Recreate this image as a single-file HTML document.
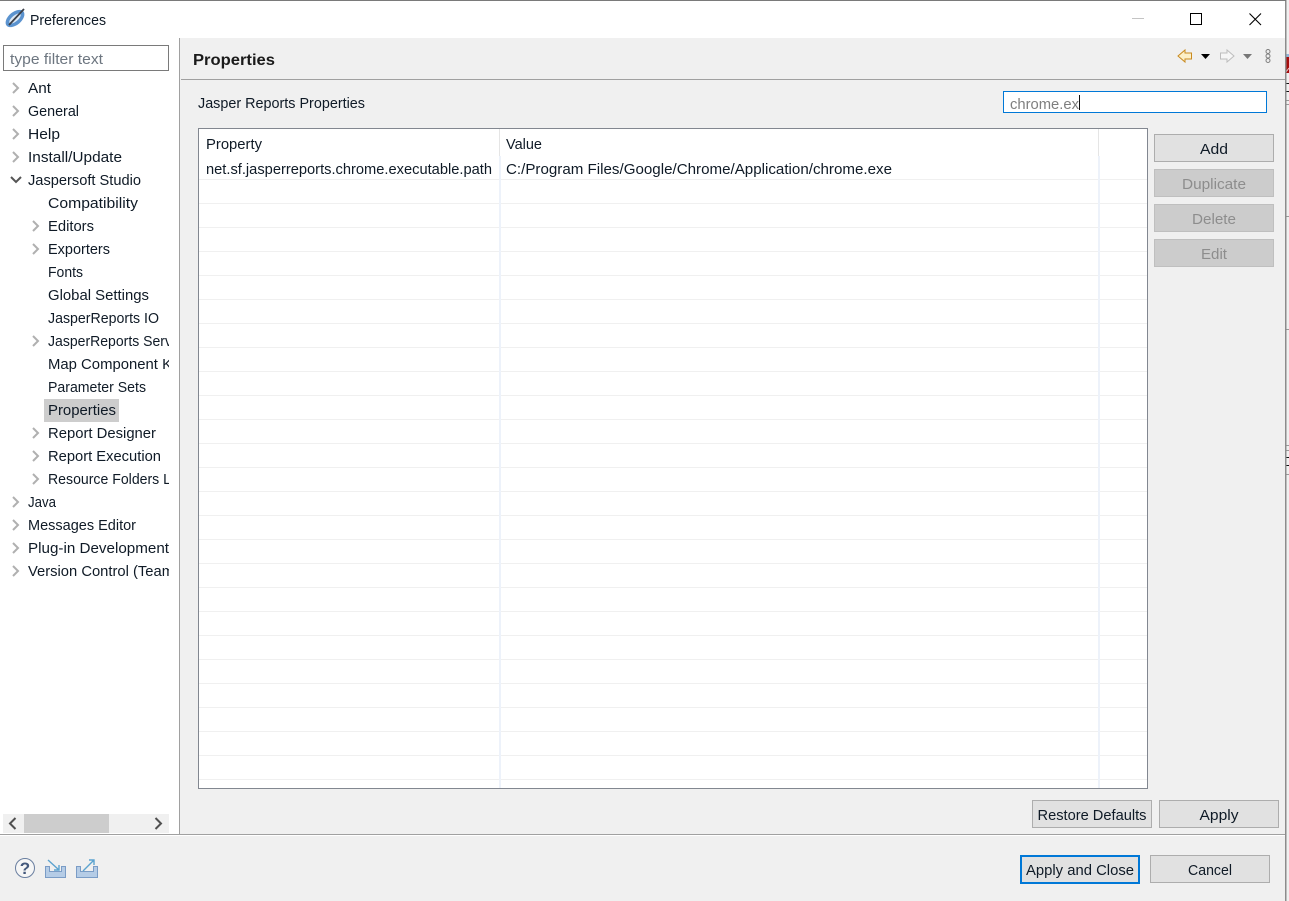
<!DOCTYPE html>
<html><head><meta charset="utf-8"><title>Preferences</title>
<style>
html,body{margin:0;padding:0;background:#f0f0f0;width:1289px;height:901px;overflow:hidden}
svg{display:block}
text{font-family:"Liberation Sans",sans-serif;font-size:15px;fill:#0f1a26}
.h{font-weight:bold;font-size:16px;fill:#1a1a1a}
.g{fill:#8a8a8a}
.d{fill:#8d8d8d}
.m{text-anchor:middle}
.c{fill:none;stroke:#b0b0b0;stroke-width:2}
.b{fill:#e1e1e1;stroke:#adadad;stroke-width:1}
.x{fill:#cccccc;stroke:#bfbfbf;stroke-width:1}
</style></head><body>
<svg width="1289" height="901" viewBox="0 0 1289 901" xmlns="http://www.w3.org/2000/svg">
<defs><clipPath id="tree"><rect x="0" y="76" width="169" height="520"/></clipPath></defs>
<rect width="1289" height="901" fill="#f0f0f0"/>
<!-- strip behind window -->
<rect x="1286" y="54" width="3" height="3" fill="#8fb4d8"/>
<rect x="1286" y="57" width="3" height="16" fill="#a60c0c"/>
<path d="M1286 72l3-4" stroke="#e8c8c8" stroke-width="1" fill="none"/>
<rect x="1286" y="83" width="3" height="1" fill="#111"/><rect x="1286" y="91" width="3" height="1" fill="#111"/>
<rect x="1286" y="100" width="3" height="1" fill="#999"/><rect x="1286" y="104" width="3" height="1" fill="#999"/>
<rect x="1286" y="216" width="3" height="1" fill="#999"/><rect x="1286" y="329" width="3" height="1" fill="#999"/>
<rect x="1286" y="445" width="3" height="1" fill="#999"/><rect x="1286" y="450" width="3" height="1" fill="#999"/>
<rect x="1286" y="457" width="3" height="1" fill="#111"/><rect x="1286" y="465" width="3" height="1" fill="#111"/>
<rect x="1286" y="474" width="3" height="1" fill="#999"/>
<rect x="1285" y="0" width="1.500" height="901" fill="#8c8c8c"/>
<!-- title bar -->
<rect x="0" y="0" width="1285" height="38" fill="#ffffff"/>
<rect x="0" y="0" width="1286" height="1" fill="#7a7a7a"/>
<g>
<ellipse cx="15" cy="18.500" rx="11" ry="6.500" transform="rotate(-40 15 18.500)" fill="#5b93cf"/>
<ellipse cx="15" cy="18.500" rx="7" ry="3" transform="rotate(-40 15 18.500)" fill="#dce9f6"/>
<path d="M9 25L24 9" stroke="#3c4048" stroke-width="1.800" fill="none"/>
</g>
<text x="30" y="25" textLength="76" lengthAdjust="spacingAndGlyphs" style="font-size:14.5px">Preferences</text>
<rect x="1132" y="18" width="12" height="1" fill="#c4c4c4"/>
<rect x="1190.500" y="13.500" width="11" height="11" fill="none" stroke="#000" stroke-width="1"/>
<path d="M1249.500 13.500L1261 25M1261 13.500L1249.500 25" stroke="#000" stroke-width="1.100" fill="none"/>
<!-- sidebar -->
<rect x="0" y="38" width="179" height="796" fill="#ffffff"/>
<rect x="179" y="38" width="1" height="796" fill="#a0a0a0"/>
<rect x="3.500" y="45.500" width="165" height="25" fill="#fff" stroke="#7a7a7a"/>
<text x="10" y="64" textLength="93" lengthAdjust="spacingAndGlyphs" class="g" style="fill:#6d7680">type filter text</text>
<rect x="44" y="399" width="75" height="23" fill="#cdcdcd"/>
<g>
<path class="c" d="M13 83l5 5-5 5M13 106l5 5-5 5M13 129l5 5-5 5M13 152l5 5-5 5M33 221l5 5-5 5M33 244l5 5-5 5M33 336l5 5-5 5M33 428l5 5-5 5M33 451l5 5-5 5M33 474l5 5-5 5M13 497l5 5-5 5M13 520l5 5-5 5M13 543l5 5-5 5M13 566l5 5-5 5"/>
<path d="M11 177l5 5 5-5" fill="none" stroke="#555" stroke-width="2"/>
</g>
<g clip-path="url(#tree)">
<text x="28" y="93" textLength="23" lengthAdjust="spacingAndGlyphs">Ant</text>
<text x="28" y="116" textLength="51" lengthAdjust="spacingAndGlyphs">General</text>
<text x="28" y="139" textLength="32" lengthAdjust="spacingAndGlyphs">Help</text>
<text x="28" y="162" textLength="94" lengthAdjust="spacingAndGlyphs">Install/Update</text>
<text x="28" y="185" textLength="113" lengthAdjust="spacingAndGlyphs">Jaspersoft Studio</text>
<text x="48" y="208" textLength="90" lengthAdjust="spacingAndGlyphs">Compatibility</text>
<text x="48" y="231" textLength="46" lengthAdjust="spacingAndGlyphs">Editors</text>
<text x="48" y="254" textLength="62" lengthAdjust="spacingAndGlyphs">Exporters</text>
<text x="48" y="277" textLength="35" lengthAdjust="spacingAndGlyphs">Fonts</text>
<text x="48" y="300" textLength="101" lengthAdjust="spacingAndGlyphs">Global Settings</text>
<text x="48" y="323" textLength="111" lengthAdjust="spacingAndGlyphs">JasperReports IO</text>
<text x="48" y="346" textLength="124" lengthAdjust="spacingAndGlyphs">JasperReports Serv</text>
<text x="48" y="369" textLength="124" lengthAdjust="spacingAndGlyphs">Map Component K</text>
<text x="48" y="392" textLength="98" lengthAdjust="spacingAndGlyphs">Parameter Sets</text>
<text x="48" y="415" textLength="68" lengthAdjust="spacingAndGlyphs">Properties</text>
<text x="48" y="438" textLength="108" lengthAdjust="spacingAndGlyphs">Report Designer</text>
<text x="48" y="461" textLength="113" lengthAdjust="spacingAndGlyphs">Report Execution</text>
<text x="48" y="484" textLength="123" lengthAdjust="spacingAndGlyphs">Resource Folders L</text>
<text x="28" y="507" textLength="28" lengthAdjust="spacingAndGlyphs">Java</text>
<text x="28" y="530" textLength="108" lengthAdjust="spacingAndGlyphs">Messages Editor</text>
<text x="28" y="553" textLength="141" lengthAdjust="spacingAndGlyphs">Plug-in Development</text>
<text x="28" y="576" textLength="146" lengthAdjust="spacingAndGlyphs">Version Control (Team</text>
</g>
<!-- sidebar scrollbar -->
<rect x="3" y="814" width="166" height="19" fill="#f0f0f0"/>
<rect x="24" y="814" width="85" height="19" fill="#cdcdcd"/>
<path d="M15.500 818l-5.500 5.500 5.500 5.500M155.500 818l5.500 5.500-5.500 5.500" fill="none" stroke="#505050" stroke-width="2"/>
<!-- header -->
<text x="193" y="65" textLength="82" lengthAdjust="spacingAndGlyphs" class="h">Properties</text>
<rect x="181" y="79" width="1104" height="1" fill="#a0a0a0"/>
<path d="M1178 56l7-6v3h6.500v6H1185v3z" fill="#fdf0c8" stroke="#c98a1e" stroke-width="1"/>
<path d="M1201 54h9l-4.500 5z" fill="#000"/>
<path d="M1234 56l-7-6v3h-6.500v6h6.500v3z" fill="#f6f6f6" stroke="#bdbdbd" stroke-width="1"/>
<path d="M1243 54h9l-4.500 5z" fill="#777"/>
<g fill="none" stroke="#7d7d7d" stroke-width="1"><circle cx="1268" cy="51.500" r="2"/><circle cx="1268" cy="56" r="2"/><circle cx="1268" cy="60.500" r="2"/></g>
<!-- heading row -->
<text x="198" y="108" textLength="167" lengthAdjust="spacingAndGlyphs">Jasper Reports Properties</text>
<rect x="1003.500" y="91.500" width="263" height="21" fill="#fff" stroke="#0078d7"/>
<text x="1010" y="109" textLength="69" lengthAdjust="spacingAndGlyphs" style="fill:#7f7f7f">chrome.ex</text>
<rect x="1079" y="95" width="1" height="15" fill="#111"/>
<!-- table -->
<rect x="198.500" y="128.500" width="949" height="660" fill="#fff" stroke="#828790"/>
<g fill="#f0f0f0">
<rect x="199" y="179" width="948" height="1"/><rect x="199" y="203" width="948" height="1"/><rect x="199" y="227" width="948" height="1"/><rect x="199" y="251" width="948" height="1"/><rect x="199" y="275" width="948" height="1"/><rect x="199" y="299" width="948" height="1"/><rect x="199" y="323" width="948" height="1"/><rect x="199" y="347" width="948" height="1"/><rect x="199" y="371" width="948" height="1"/><rect x="199" y="395" width="948" height="1"/><rect x="199" y="419" width="948" height="1"/><rect x="199" y="443" width="948" height="1"/><rect x="199" y="467" width="948" height="1"/><rect x="199" y="491" width="948" height="1"/><rect x="199" y="515" width="948" height="1"/><rect x="199" y="539" width="948" height="1"/><rect x="199" y="563" width="948" height="1"/><rect x="199" y="587" width="948" height="1"/><rect x="199" y="611" width="948" height="1"/><rect x="199" y="635" width="948" height="1"/><rect x="199" y="659" width="948" height="1"/><rect x="199" y="683" width="948" height="1"/><rect x="199" y="707" width="948" height="1"/><rect x="199" y="731" width="948" height="1"/><rect x="199" y="755" width="948" height="1"/><rect x="199" y="779" width="948" height="1"/>
</g>
<rect x="499" y="129" width="1" height="27" fill="#e5e5e5"/>
<rect x="1098" y="129" width="1" height="27" fill="#e5e5e5"/>
<rect x="499" y="156" width="2" height="632" fill="#edf2fa"/>
<rect x="1098" y="156" width="2" height="632" fill="#edf2fa"/>
<text x="206" y="149" textLength="56" lengthAdjust="spacingAndGlyphs">Property</text>
<text x="506" y="149" textLength="36" lengthAdjust="spacingAndGlyphs">Value</text>
<text x="206" y="174" textLength="286" lengthAdjust="spacingAndGlyphs">net.sf.jasperreports.chrome.executable.path</text>
<text x="506" y="174" textLength="386" lengthAdjust="spacingAndGlyphs">C:/Program Files/Google/Chrome/Application/chrome.exe</text>
<!-- right buttons -->
<rect class="b" x="1154.500" y="134.500" width="119" height="27"/>
<text class="m" x="1214" y="154" textLength="28" lengthAdjust="spacingAndGlyphs">Add</text>
<rect class="x" x="1154.500" y="169.500" width="119" height="27"/>
<text class="m d" x="1214" y="189" textLength="64" lengthAdjust="spacingAndGlyphs">Duplicate</text>
<rect class="x" x="1154.500" y="204.500" width="119" height="27"/>
<text class="m d" x="1214" y="224" textLength="44" lengthAdjust="spacingAndGlyphs">Delete</text>
<rect class="x" x="1154.500" y="239.500" width="119" height="27"/>
<text class="m d" x="1214" y="259" textLength="26" lengthAdjust="spacingAndGlyphs">Edit</text>
<!-- lower buttons -->
<rect class="b" x="1032.500" y="800.500" width="119" height="27"/>
<text class="m" x="1092" y="820" textLength="109" lengthAdjust="spacingAndGlyphs">Restore Defaults</text>
<rect class="b" x="1159.500" y="800.500" width="119" height="27"/>
<text class="m" x="1219" y="820" textLength="39" lengthAdjust="spacingAndGlyphs">Apply</text>
<rect x="0" y="834" width="1285" height="1" fill="#a0a0a0"/>
<rect x="0" y="835" width="1285" height="1" fill="#ffffff"/>
<rect x="1021" y="856" width="118" height="27" fill="#e1e1e1" stroke="#0078d7" stroke-width="2"/>
<text class="m" x="1080" y="875" textLength="108" lengthAdjust="spacingAndGlyphs">Apply and Close</text>
<rect class="b" x="1150.500" y="855.500" width="119" height="27"/>
<text class="m" x="1210" y="875" textLength="44" lengthAdjust="spacingAndGlyphs">Cancel</text>
<!-- bottom icons -->
<circle cx="25" cy="868" r="9.500" fill="#fff" fill-opacity=".4" stroke="#6a7fa0" stroke-width="1"/>
<text x="25" y="874" text-anchor="middle" style="font-size:17px;font-weight:bold;fill:#44597c">?</text>
<path d="M45.500 866.500v11h20v-11h-4v5h-12v-5z" fill="#b5cce6" stroke="#7a9cc6"/>
<path d="M48 860l11 10m0-5v5h-5" fill="none" stroke="#5ca3cf" stroke-width="1.400"/>
<path d="M76.500 866.500v11h21v-11h-4v5h-13v-5z" fill="#b5cce6" stroke="#7a9cc6"/>
<path d="M83 871l11-11m-5 0h5v5" fill="none" stroke="#5ca3cf" stroke-width="1.400"/>
</svg>
</body></html>
